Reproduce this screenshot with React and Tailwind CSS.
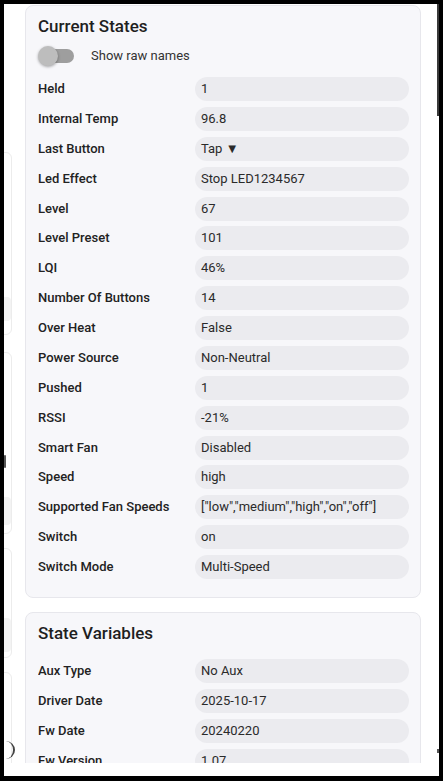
import React from "react";

const current = [
  ["Held", "1"],
  ["Internal Temp", "96.8"],
  ["Last Button", "Tap ▼"],
  ["Led Effect", "Stop LED1234567"],
  ["Level", "67"],
  ["Level Preset", "101"],
  ["LQI", "46%"],
  ["Number Of Buttons", "14"],
  ["Over Heat", "False"],
  ["Power Source", "Non-Neutral"],
  ["Pushed", "1"],
  ["RSSI", "-21%"],
  ["Smart Fan", "Disabled"],
  ["Speed", "high"],
  ["Supported Fan Speeds", '["low","medium","high","on","off"]'],
  ["Switch", "on"],
  ["Switch Mode", "Multi-Speed"],
];

const stateVars = [
  ["Aux Type", "No Aux"],
  ["Driver Date", "2025-10-17"],
  ["Fw Date", "20240220"],
  ["Fw Version", "1.07"],
];

function Row({ label, value }) {
  return (
    <div className="flex items-center h-[24px]">
      <div className="w-[157px] shrink-0 text-[13px] font-medium text-[#222] leading-[16px] whitespace-nowrap overflow-hidden">
        {label}
      </div>
      <div className="w-[214px] h-[24px] rounded-full bg-[#ebebef] pl-[6px] flex items-center text-[13px] text-[#2a2a2a] leading-[16px] whitespace-nowrap">
        {value}
      </div>
    </div>
  );
}

function Card({ title, children, rows, last }) {
  return (
    <div className={"rounded-[8px] border border-[#e7e7ec] bg-[#f7f7fa] pl-3 pr-[11px] pt-2 " + (last ? "pb-[40px]" : "pb-[18px]")}>
      <div className="text-[17px] leading-[24px] font-medium text-[#1f1f1f]">{title}</div>
      {children}
      <div className="flex flex-col gap-[5.875px]">
        {rows.map(([l, v]) => (
          <Row key={l} label={l} value={v} />
        ))}
      </div>
    </div>
  );
}

export default function App() {
  return (
    <div
      className="w-[443px] h-[781px] bg-black pt-[4px] pl-[4px] pr-[4px] pb-[5px]"
      style={{ fontFamily: "Roboto, 'Liberation Sans', sans-serif" }}
    >
      <div className="w-[435px] h-[772px] bg-white flex flex-col">
        <div className="h-[759px] overflow-hidden flex">
          {/* background page fragments on the left */}
          <div className="w-[21px] shrink-0 overflow-hidden flex flex-col">
            <div className="mt-[148px] h-[183px] w-[30px] -ml-[22px] shrink-0 rounded-[6px] border border-[#ececec] bg-white flex flex-col">
              <div className="mt-[144px] h-[24px] w-[28px] bg-[#f3f3f3] rounded-[4px]" />
            </div>
            <div className="mt-[17px] h-[182px] w-[30px] -ml-[22px] shrink-0 rounded-[6px] border border-[#ececec] bg-white flex flex-col">
              <div className="mt-[102px] ml-[21px] h-[13px] w-[2px] bg-[#555] rounded-full" />
              <div className="mt-[29px] h-[28px] w-[28px] bg-[#f3f3f3] rounded-[4px]" />
            </div>
            <div className="mt-[14px] h-[110px] w-[30px] -ml-[22px] shrink-0 rounded-[6px] border border-[#ececec] bg-white flex flex-col">
              <div className="mt-[69px] h-[34px] w-[28px] bg-[#f3f3f3] rounded-[4px]" />
            </div>
            <div className="mt-[14px] h-[200px] w-[30px] -ml-[22px] shrink-0 rounded-[6px] border border-[#ececec] bg-white flex flex-col">
              <div className="mt-[68px] ml-[14px] h-[18px] w-[18px] border-r-2 border-[#444] rounded-full" />
            </div>
          </div>

          {/* main column */}
          <div className="w-[396px] shrink-0 pt-[1px] flex flex-col gap-[14px]">
            <Card title="Current States" rows={current}>
              <div className="mt-[8px] mb-[11px] h-[20px] flex items-center">
                <div className="relative w-[36px] h-[20px] flex items-center shrink-0">
                  <div className="w-[35px] h-[14px] ml-[1px] rounded-full bg-[#9e9e9e]" />
                  <div className="absolute left-0 top-0 w-[20px] h-[20px] rounded-full bg-[#bdbdbd] shadow-[0_1px_3px_rgba(0,0,0,0.35)]" />
                </div>
                <div className="ml-[17px] text-[13px] text-[#333]">Show raw names</div>
              </div>
            </Card>
            <Card title="State Variables" rows={stateVars} last>
              <div className="h-[14px]" />
            </Card>
          </div>

          {/* right gutter + scrollbar */}
          <div className="w-[16px] shrink-0" />
          <div className="w-[2px] shrink-0 flex flex-col justify-between">
            <div className="h-[112px] bg-[#3a3a3a]" />
            <div className="h-[4px] mb-[10px] bg-[#555]" />
          </div>
        </div>
        <div className="flex-1 bg-white" />
      </div>
    </div>
  );
}
